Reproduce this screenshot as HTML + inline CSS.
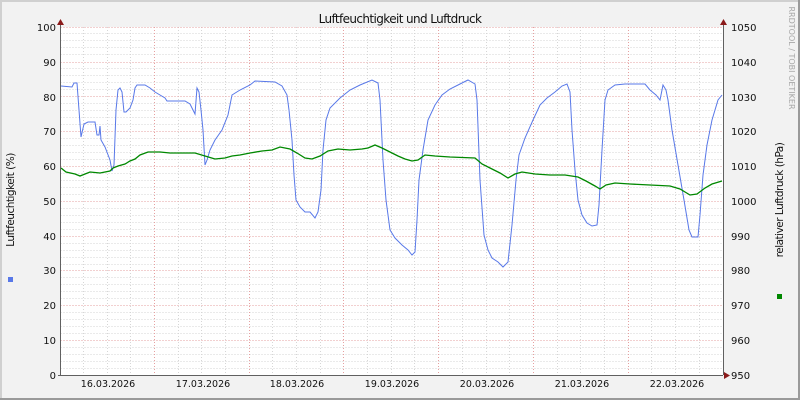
<!DOCTYPE html>
<html><head><meta charset="utf-8"><style>
html,body{margin:0;padding:0;background:#f2f2f2}
svg{display:block}
text{font-family:"DejaVu Sans","Liberation Sans",sans-serif;}
</style></head><body>
<svg width="800" height="400" xmlns="http://www.w3.org/2000/svg">
<rect x="0" y="0" width="800" height="400" fill="#f2f2f2"/>
<rect x="0" y="0" width="800" height="2" fill="#d0d0d0"/>
<rect x="0" y="0" width="2" height="400" fill="#d0d0d0"/>
<rect x="798" y="0" width="2" height="400" fill="#9a9a9a"/>
<rect x="0" y="398" width="800" height="2" fill="#9a9a9a"/>
<rect x="60" y="27" width="663" height="348" fill="#ffffff"/>
<g stroke="#d6d6d6" stroke-width="1" stroke-dasharray="1,2">
<path d="M60.5 33.5H723M60.5 40.5H723M60.5 47.5H723M60.5 54.5H723M60.5 68.5H723M60.5 75.5H723M60.5 82.5H723M60.5 89.5H723M60.5 103.5H723M60.5 110.5H723M60.5 117.5H723M60.5 124.5H723M60.5 138.5H723M60.5 145.5H723M60.5 152.5H723M60.5 159.5H723M60.5 173.5H723M60.5 180.5H723M60.5 187.5H723M60.5 194.5H723M60.5 208.5H723M60.5 215.5H723M60.5 222.5H723M60.5 229.5H723M60.5 243.5H723M60.5 250.5H723M60.5 257.5H723M60.5 264.5H723M60.5 277.5H723M60.5 284.5H723M60.5 291.5H723M60.5 298.5H723M60.5 312.5H723M60.5 319.5H723M60.5 326.5H723M60.5 333.5H723M60.5 347.5H723M60.5 354.5H723M60.5 361.5H723M60.5 368.5H723"/>
<path d="M83.5 27V375M107.5 27V375M130.5 27V375M178.5 27V375M201.5 27V375M225.5 27V375M272.5 27V375M296.5 27V375M320.5 27V375M367.5 27V375M391.5 27V375M414.5 27V375M462.5 27V375M486.5 27V375M509.5 27V375M557.5 27V375M580.5 27V375M604.5 27V375M651.5 27V375M675.5 27V375M699.5 27V375"/>
</g>
<g stroke="#e6a0a0" stroke-width="1" stroke-dasharray="1,2">
<path d="M60.5 27.5H723M60.5 62.5H723M60.5 96.5H723M60.5 131.5H723M60.5 166.5H723M60.5 201.5H723M60.5 236.5H723M60.5 270.5H723M60.5 305.5H723M60.5 340.5H723"/>
<path d="M154.5 27V375M249.5 27V375M343.5 27V375M438.5 27V375M533.5 27V375M628.5 27V375"/>
</g>
<polyline fill="none" stroke="#5878e8" stroke-width="1" points="61,86 72,87 74,83 77,83 79,110 81,137 84,124 88,122 95,122 97,135 99,135 100,126 101,140 105,147 110,160 112,171 114,165 116,110 118,90 120,88 122,92 124,112 126,112 130,108 133,100 135,88 137,85 145,85 150,88 155,92 160,95 165,98 167,101 185,101 190,104 193,110 195,114 197,88 199,92 201,110 203,130 205,165 207,160 210,150 215,140 222,130 228,115 232,95 240,90 250,85 255,81 275,82 282,86 287,95 289,110 292,140 294,175 296,200 300,207 305,212 310,212 315,218 318,212 321,190 323,150 326,120 330,108 340,98 350,90 360,85 372,80 378,83 380,100 383,160 386,200 390,230 395,238 402,245 408,250 412,255 415,252 417,220 419,180 423,150 428,120 435,105 442,95 450,89 460,84 468,80 475,84 477,100 480,180 484,235 488,250 492,258 498,262 503,267 508,262 512,225 516,180 519,155 525,138 533,120 540,105 547,98 555,92 562,86 567,84 570,92 572,130 575,170 578,200 582,215 587,223 592,226 597,225 599,205 602,150 605,100 608,90 615,85 625,84 645,84 650,90 656,95 660,100 663,85 666,90 668,100 672,130 678,165 684,200 689,230 692,237 698,237 700,215 703,175 707,145 712,120 718,100 722,95"/>
<polyline fill="none" stroke="#008800" stroke-width="1.3" points="61,168 66,172 75,174 80,176 90,172 100,173 110,171 113,168 118,166 125,164 130,161 135,159 140,155 148,152 160,152 170,153 195,153 205,156 215,159 225,158 232,156 240,155 250,153 262,151 272,150 280,147 290,149 297,153 305,158 312,159 320,156 328,151 338,149 350,150 362,149 368,148 375,145 382,148 390,152 398,156 405,159 412,161 418,160 425,155 435,156 450,157 475,158 482,164 490,168 500,173 508,178 515,174 522,172 535,174 550,175 565,175 578,177 586,181 595,186 600,189 606,185 615,183 630,184 650,185 670,186 680,189 690,195 697,194 705,188 712,184 722,181"/>
<g stroke="#606060" stroke-width="1"><path d="M60.5 24V375M723.5 24V375M58 375.5H723"/></g>
<path d="M57 25L60.5 19L64 25Z" fill="#8b1a1a"/>
<path d="M720 25L723.5 19L727 25Z" fill="#8b1a1a"/>
<path d="M724 372L730 375.5L724 379Z" fill="#8b1a1a"/>
<g font-size="10" fill="#111" text-anchor="end">
<text x="56" y="31">100</text><text x="56" y="66">90</text><text x="56" y="101">80</text><text x="56" y="135">70</text><text x="56" y="170">60</text><text x="56" y="205">50</text><text x="56" y="240">40</text><text x="56" y="274">30</text><text x="56" y="309">20</text><text x="56" y="344">10</text><text x="56" y="379">0</text>
</g>
<g font-size="10" fill="#111" text-anchor="start">
<text x="731" y="31">1050</text><text x="731" y="66">1040</text><text x="731" y="101">1030</text><text x="731" y="135">1020</text><text x="731" y="170">1010</text><text x="731" y="205">1000</text><text x="731" y="240">990</text><text x="731" y="274">980</text><text x="731" y="309">970</text><text x="731" y="344">960</text><text x="731" y="379">950</text>
</g>
<g font-size="9.5" fill="#111" text-anchor="middle">
<text x="108" y="387">16.03.2026</text><text x="203" y="387">17.03.2026</text><text x="297" y="387">18.03.2026</text><text x="392" y="387">19.03.2026</text><text x="487" y="387">20.03.2026</text><text x="582" y="387">21.03.2026</text><text x="677" y="387">22.03.2026</text>
</g>
<text x="400" y="23" font-size="12" fill="#111" text-anchor="middle" letter-spacing="-0.6">Luftfeuchtigkeit und Luftdruck</text>
<text transform="translate(14,200) rotate(-90)" font-size="10.5" fill="#111" text-anchor="middle" letter-spacing="-0.5">Luftfeuchtigkeit (%)</text>
<text transform="translate(783,200) rotate(-90)" font-size="10.5" fill="#111" text-anchor="middle" letter-spacing="-0.5">relativer Luftdruck (hPa)</text>
<text transform="translate(789,58) rotate(90)" font-size="8" fill="#a8a8a8" text-anchor="middle">RRDTOOL / TOBI OETIKER</text>
<rect x="8" y="277" width="5" height="5" fill="#5878e8"/>
<rect x="777" y="294" width="5" height="5" fill="#008800"/>
</svg>
</body></html>
